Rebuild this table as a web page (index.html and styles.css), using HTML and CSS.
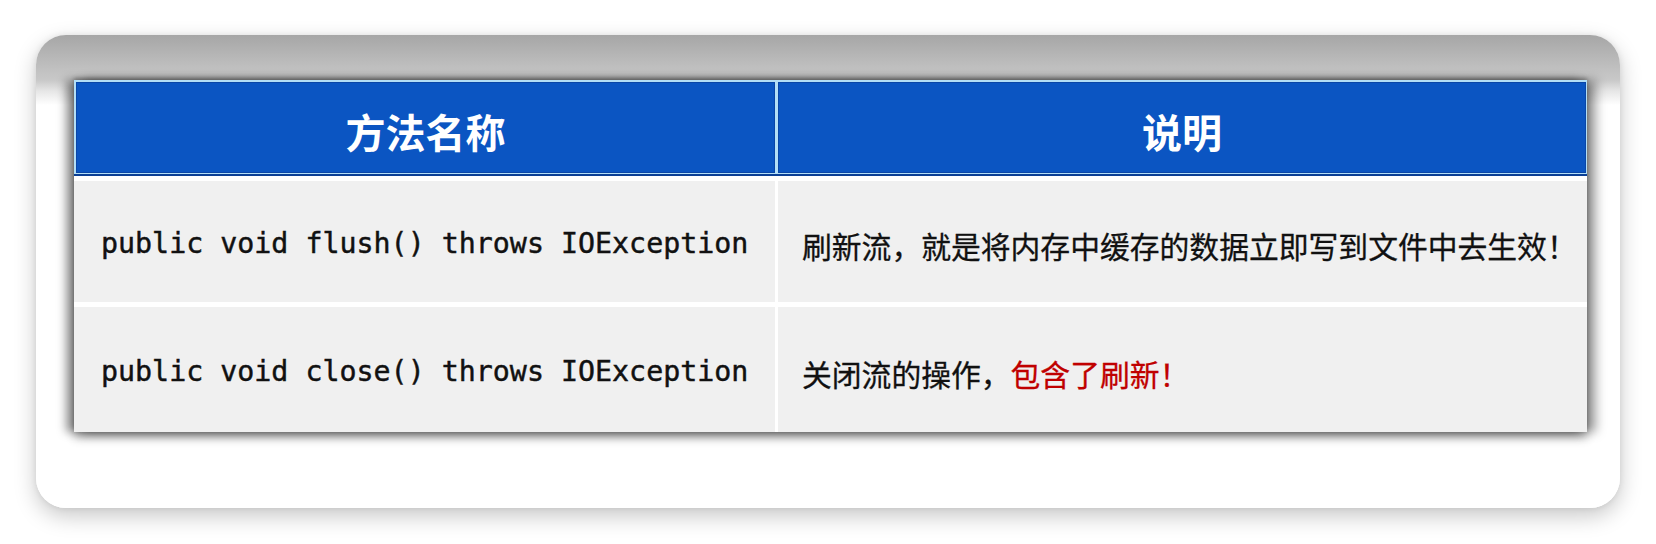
FILE: index.html
```html
<!DOCTYPE html>
<html lang="zh">
<head>
<meta charset="utf-8">
<title>flush / close</title>
<link rel="stylesheet" href="styles.css">
</head>
<body>
<div class="card">
  <div class="table">
    <div class="head">
      <div class="hcell">方法名称</div>
      <div class="hcell">说明</div>
    </div>
    <div class="row">
      <div class="cell code">public void flush() throws IOException</div>
      <div class="cell desc">刷新流，就是将内存中缓存的数据立即写到文件中去生效！</div>
    </div>
    <div class="row row2">
      <div class="cell code">public void close() throws IOException</div>
      <div class="cell desc">关闭流的操作，<span class="red">包含了刷新！</span></div>
    </div>
  </div>
</div>
</body>
</html>
```

FILE: styles.css
```css
html, body {
  margin: 0;
  padding: 0;
  background: #ffffff;
}
body {
  width: 1656px;
  height: 544px;
  overflow: hidden;
  font-family: "Noto Sans CJK SC", "Noto Sans", sans-serif;
}
.card {
  margin: 35px 0 0 36px;
  width: 1584px;
  height: 473px;
  box-sizing: border-box;
  padding: 45px 33px 0 38px;
  border-radius: 30px;
  background: linear-gradient(180deg, #a6a6a6 0px, #c2c2c2 36px, #c8c8c8 45px, #e6e6e6 56px, #ffffff 70px);
  box-shadow: 0 8px 22px rgba(0, 0, 0, 0.22), 0 0 6px rgba(0, 0, 0, 0.08);
}
.table {
  width: 1513px;
  display: flex;
  flex-direction: column;
  background: #ffffff;
  box-shadow: -8px 0 9px rgba(0, 0, 0, 0.4), 9px 0 10px rgba(0, 0, 0, 0.36), 0 6px 9px rgba(0, 0, 0, 0.3), 0 -2px 4px rgba(0, 0, 0, 0.25);
}
.head {
  display: grid;
  grid-template-columns: 699px 1fr;
  column-gap: 3px;
  height: 96px;
  box-sizing: border-box;
  padding: 2px 1px 1px 2px;
  background: #b3def6;
  border-bottom: 2px solid #0a3f95;
}
.hcell {
  background: #0b55c2;
  box-shadow: inset 0 0 0 1px #0946a8;
  color: #ffffff;
  font-weight: 700;
  font-size: 40px;
  display: flex;
  align-items: center;
  justify-content: center;
  padding-top: 6px;
  box-sizing: border-box;
}
.row {
  display: grid;
  grid-template-columns: 701px 1fr;
  column-gap: 3px;
  height: 121px;
  margin-top: 5px;
}
.row2 {
  height: 125px;
  margin-top: 5px;
}
.cell {
  background: #f0f0f0;
  display: flex;
  align-items: center;
  color: #111111;
  box-sizing: border-box;
  white-space: nowrap;
}
.code {
  padding-left: 27px;
  padding-top: 4px;
  font-family: "DejaVu Sans Mono", "Liberation Mono", monospace;
  font-size: 28.3px;
  -webkit-text-stroke: 0.45px #111111;
}
.desc {
  padding-left: 24px;
  padding-top: 6px;
  font-size: 29.8px;
  -webkit-text-stroke: 0.3px #111111;
}
.red {
  color: #c00000;
  -webkit-text-stroke: 0.3px #c00000;
}
```
